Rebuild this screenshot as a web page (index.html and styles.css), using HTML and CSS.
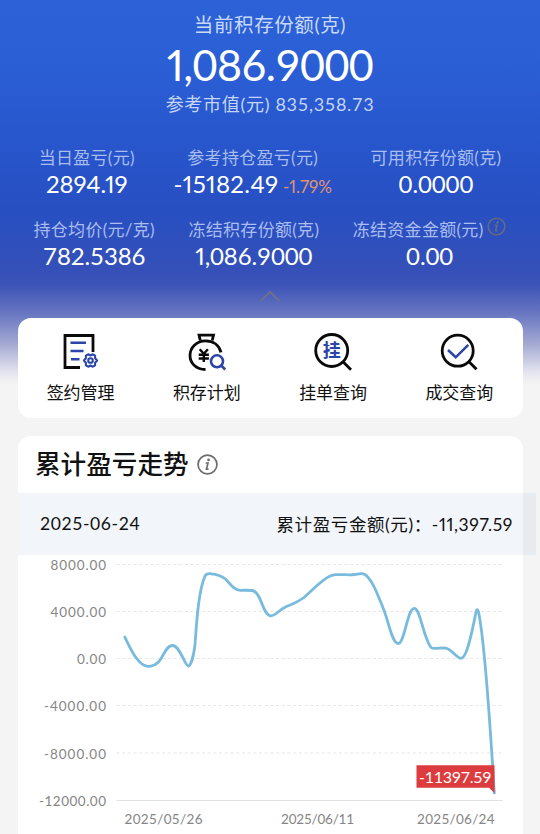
FILE: index.html
```html
<!DOCTYPE html>
<html lang="zh-CN">
<head>
    <meta charset="UTF-8">
    <meta name="viewport" content="width=device-width, initial-scale=1.0">
    <title>积存金</title>
    <link rel="stylesheet" href="styles.css">
</head>
<body>
    <div class="hero">
        <div class="hero-title">当前积存份额(克)</div>
        <div class="hero-amount"><span class="prop">1,</span>086.9000</div>
        <div class="hero-sub">参考市值(元) <span class="hero-value">835,358.73</span></div>

        <div class="stats">
            <div class="stat">
                <div class="stat-label">当日盈亏(元)</div>
                <div class="stat-value prop">2894.19</div>
            </div>
            <div class="stat">
                <div class="stat-label">参考持仓盈亏(元)</div>
                <div class="stat-value prop wide">-15182.49 <span class="rate">-1.79%</span></div>
            </div>
            <div class="stat">
                <div class="stat-label">可用积存份额(克)</div>
                <div class="stat-value">0.0000</div>
            </div>
        </div>
        <div class="stats">
            <div class="stat">
                <div class="stat-label">持仓均价(元/克)</div>
                <div class="stat-value">782.5386</div>
            </div>
            <div class="stat">
                <div class="stat-label">冻结积存份额(克)</div>
                <div class="stat-value"><span class="prop">1,</span>086.9000</div>
            </div>
            <div class="stat">
                <div class="stat-label">冻结资金金额(元)
                    <svg class="info-small" viewBox="0 0 20 20"><circle cx="10" cy="10" r="8.8"/><path d="M8.3 8.6h2.2L9 14.4h2"/><circle class="dot" cx="11" cy="5.7" r="1.3"/></svg>
                </div>
                <div class="stat-value">0.00</div>
            </div>
        </div>
        <svg class="collapse" viewBox="0 0 22 12"><path d="M1.5 11L11 2l9.5 9"/></svg>
    </div>

    <div class="card actions">
        <div class="action">
            <svg viewBox="0 0 40 40" class="icon">
                <path class="line" d="M32 20V3.5H4v32H19"/>
                <path class="blue" d="M9.5 10.8h15.5M9.5 19h13M10 27.2h8.5"/>
                <path class="gear" d="M27.2 22.3l2.3 1.2 2.3-1.2 2.3 1.4v2.5l2 2.3-2 2.3v2.5l-2.3 1.4-2.3-1.2-2.3 1.2-2.3-1.4v-2.5l-2-2.3 2-2.3v-2.5z"/>
                <circle class="gear" cx="29.5" cy="28.5" r="2.3"/>
            </svg>
            <span>签约管理</span>
        </div>
        <div class="action">
            <svg viewBox="0 0 40 40" class="icon">
                <path class="line" d="M13.3 8.5L12 3.2h14.5L25.2 8.5"/>
                <path class="line" d="M18.5 37.500C9.500 37.500 3 31.500 3 23.500S9.500 8.800 18.500 8.800c7.500 0 13.500 4.200 15.500 11.500"/>
                <path class="yen" d="M12.7 17.2l4.1 4.5 4.1-4.5M11.7 22.7h10.2M11.7 26.5h10.2M16.8 21.5v8.5"/>
                <circle class="blue" cx="30" cy="29.3" r="6"/>
                <path class="blue" d="M34.2 33.5l4 4"/>
            </svg>
            <span>积存计划</span>
        </div>
        <div class="action">
            <svg viewBox="0 0 40 40" class="icon">
                <circle class="line" cx="18.7" cy="18.5" r="16"/>
                <path class="line" d="M30 29.8l8 8"/>
                <text x="18.7" y="25" class="char">挂</text>
            </svg>
            <span>挂单查询</span>
        </div>
        <div class="action">
            <svg viewBox="0 0 40 40" class="icon">
                <circle class="line" cx="18.7" cy="18.7" r="15.5"/>
                <path class="line" d="M29.5 29.2l8 8"/>
                <path class="blue" d="M9 18l7.7 7.3L29.3 12.8"/>
            </svg>
            <span>成交查询</span>
        </div>
    </div>

    <div class="card trend">
        <div class="trend-head">
            <h2>累计盈亏走势</h2>
            <svg class="info" viewBox="0 0 20 20"><circle cx="10" cy="10" r="9"/><path d="M8.3 8.6h2.2L9 14.4h2"/><circle class="dot" cx="11" cy="5.7" r="1.3"/></svg>
        </div>
        <div class="band">
            <span class="date">2025-06-24</span>
            <span class="total">累计盈亏金额(元)：<b class="prop">-11,397.59</b></span>
        </div>
        <svg class="chart" viewBox="17.5 555 505 279">
            <g class="grid">
                <path d="M116 564.5h386M116 611.5h386M116 658.5h386M116 705.5h386M116 753h386"/>
            </g>
            <path class="axis" d="M116 800.5h386"/>
            <g class="labels">
                <text x="50" y="569.5" textLength="55.5">8000.00</text>
                <text x="50" y="616.8" textLength="55.5">4000.00</text>
                <text x="76.5" y="664" textLength="29">0.00</text>
                <text x="43.5" y="711.3" textLength="62">-4000.00</text>
                <text x="43.5" y="758.5" textLength="62">-8000.00</text>
                <text x="38.5" y="805.8" textLength="67">-12000.00</text>
                <text x="124" y="823.5" textLength="78">2025/05/26</text>
                <text x="280.5" y="823.5" textLength="73">2025/06/11</text>
                <text x="416.5" y="823.5" textLength="77.5">2025/06/24</text>
            </g>
            <path class="curve" d="M124.3 637C130 649 138 666.3 147.5 666.3C164 666.3 162 645.5 172 645.5C179.5 645.5 184.5 666 187.7 666C190 666 193 657 194.5 645C196.5 615 198.5 590 204.5 576C206 573 208.5 573.5 211 573.8C216 574.2 221 576 225 579C229 583 233 590.3 240 590.3C244 590.3 248 590 252 590.5C261 592 262 615.8 270.5 615.8C275 615.8 279 609.5 285 607C292 604 297 602.5 304 597C314 588 326 575 335 574.7C342 574 348 575.5 354 574.5C358 574 361 572.8 364 574.2C372 579 378 597 383 609C388 621 391.5 643.5 397.7 643.5C404 643.5 407 608.3 413.7 608.3C420 608.3 422 636 430.5 647.5C433 649.5 438 647.8 444 647.8C451 648 456 658.3 460.5 658.3C466 658.3 471 635 475.5 612C476.2 608.8 477.3 608.8 478 612C484 640 490 730 493.8 793"/>
            <path class="tag" d="M416 765.2h78V793l-5.5-5.3H416z"/>
            <text class="tag-text" x="418.5" y="782.5" textLength="72.5">-11397.59</text>
        </svg>
    </div>
</body>
</html>
```

FILE: styles.css
```css
* {
    box-sizing: border-box;
}
body {
    margin: 0;
    height: 834px;
    overflow: hidden;
    font-family: Lato, "Noto Sans CJK SC", sans-serif;
    color: #111;
    background: linear-gradient(180deg, #2c61d8 0, #2b5fd6 60px, #2856cc 140px, #274fc2 210px, #3550b8 270px, #3b53b7 284px, #6977c1 314px, #a6abd4 345px, #e4e4ef 372px, #f4f4f4 384px);
}
.prop {
    font-variant-numeric: proportional-nums;
}
.hero {
    height: 318px;
    padding-top: 10px;
    text-align: center;
    color: #fff;
    white-space: nowrap;
}
.hero-title {
    height: 29px;
    line-height: 30px;
    font-size: 19.5px;
    letter-spacing: 0.6px;
    color: #c9daf8;
}
.hero-amount {
    height: 52px;
    line-height: 52px;
    font-size: 43px;
    letter-spacing: -0.5px;
}
.hero-sub {
    height: 24px;
    line-height: 26px;
    font-size: 18px;
    letter-spacing: 0.7px;
    color: #c4d5f7;
}
.stats {
    display: flex;
    justify-content: space-evenly;
    height: 72px;
}
.hero-sub + .stats {
    margin-top: 29px;
}
.stat-label {
    display: flex;
    align-items: center;
    justify-content: center;
    height: 24px;
    font-size: 17px;
    letter-spacing: 0.3px;
    color: #a9bdf0;
}
.stat-value {
    height: 30px;
    line-height: 32px;
    font-size: 24px;
    letter-spacing: -0.1px;
}
.stat-value.wide {
    letter-spacing: 0.4px;
}
.rate {
    margin-left: -2px;
    font-size: 17px;
    letter-spacing: 0;
    color: #e0936f;
}
.info-small,
.info {
    fill: none;
    stroke: #666b80;
    stroke-width: 1.6;
}
.info-small {
    width: 19px;
    height: 19px;
    margin: -3px 0 0 4px;
}
.info-small .dot,
.info .dot {
    fill: #666b80;
    stroke: none;
}
.collapse {
    display: block;
    width: 22px;
    height: 12px;
    margin: 2px auto 0;
    fill: none;
    stroke: #6b7190;
    stroke-width: 2;
}
.card {
    width: 505px;
    margin: 0 auto;
    background: #fff;
    border-radius: 13px;
}
.actions {
    display: grid;
    grid-template-columns: repeat(4, 1fr);
    height: 100px;
    padding-top: 14px;
}
.action {
    display: flex;
    flex-direction: column;
    align-items: center;
    font-size: 17px;
    line-height: 24px;
    color: #111;
}
.icon {
    width: 40px;
    height: 40px;
    margin-bottom: 9px;
    fill: none;
}
.line {
    stroke: #0a0a0a;
    stroke-width: 2.8;
}
.blue {
    stroke: #2b45a8;
    stroke-width: 2.6;
}
.gear {
    stroke: #2b45a8;
    stroke-width: 2.1;
    stroke-linejoin: round;
}
.yen {
    stroke: #0a0a0a;
    stroke-width: 2.4;
}
.char {
    font-size: 18px;
    font-weight: 700;
    text-anchor: middle;
    fill: #2b45a8;
}
.trend {
    height: 420px;
    margin-top: 17.5px;
}
.trend-head {
    display: flex;
    align-items: center;
    height: 57.5px;
    padding-left: 17.5px;
}
.trend-head h2 {
    margin: 0;
    font-size: 25.6px;
    font-weight: 500;
    line-height: 30px;
}
.info {
    width: 21px;
    height: 21px;
    margin-left: 8.5px;
    stroke: #6c6c6c;
}
.info .dot {
    fill: #6c6c6c;
}
.band {
    display: flex;
    align-items: center;
    justify-content: space-between;
    width: 518px;
    height: 62px;
    padding: 0 22.5px 2px;
    font-size: 17.5px;
    background: rgba(38, 88, 172, 0.06);
}
.date {
    letter-spacing: 0.6px;
}
.total {
    letter-spacing: 0.6px;
}
.total b {
    font-weight: 400;
}
.chart {
    display: block;
    width: 505px;
    height: 279px;
}
.grid {
    stroke: #e6e6e6;
    stroke-width: 1.2;
    stroke-dasharray: 3 2.7;
}
.axis {
    stroke: #e2e2e2;
    stroke-width: 1.2;
}
.labels {
    font-size: 13.5px;
    fill: #858585;
}
.curve {
    fill: none;
    stroke: #78bbdd;
    stroke-width: 2.8;
    stroke-linecap: round;
    stroke-linejoin: round;
}
.tag {
    fill: #dc3c3e;
}
.tag-text {
    font-size: 16px;
    fill: #fff;
}
```
